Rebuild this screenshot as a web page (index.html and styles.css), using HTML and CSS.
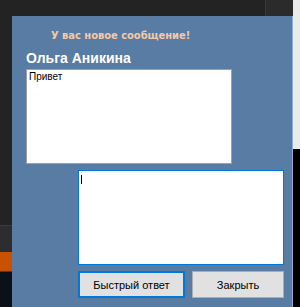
FILE: index.html
```html
<!DOCTYPE html>
<html lang="ru">
<head>
  <meta charset="UTF-8" />
  <title>Новое сообщение</title>
  <link rel="stylesheet" href="styles.css">
</head>
<body>
  <div class="side-left">
    <div class="dark"></div>
    <div class="tab"></div>
    <div class="accent"></div>
    <div class="bottom"></div>
  </div>

  <div class="middle">
    <div class="topbar">
      <div class="topbar-main"></div>
      <div class="topbar-rest"></div>
    </div>

    <div class="dialog">
      <div class="title">У вас новое сообщение!</div>
      <div class="sender">Ольга Аникина</div>
      <div class="box message">Привет</div>
      <div class="box reply"><span class="caret"></span></div>
      <div class="actions">
        <button class="btn btn-default">Быстрый ответ</button>
        <button class="btn btn-close">Закрыть</button>
      </div>
    </div>
  </div>

  <div class="side-right">
    <div class="light"></div>
    <div class="black"></div>
  </div>
</body>
</html>
```

FILE: styles.css
```css
html, body {
  height: 100%;
}
body {
  margin: 0;
  display: flex;
  width: 300px;
  height: 307px;
  overflow: hidden;
  background: #222;
  font-family: "DejaVu Sans", sans-serif;
}

/* background windows around the dialog */
.side-left {
  width: 12px;
  display: flex;
  flex-direction: column;
}
.side-left .dark { height: 225px; background: #232323; border-bottom: 1px solid #3b3b3b; }
.side-left .tab { height: 26px; background: #2d2d30; }
.side-left .accent { height: 19px; background: #ca5100; border-bottom: 1px solid #6a2e08; }
.side-left .bottom { flex: 1; background: #0b1118; }

.side-right {
  width: 7px;
  display: flex;
  flex-direction: column;
}
.side-right .light { height: 149px; background: #ebebeb; }
.side-right .black { flex: 1; background: #000; }

.middle {
  width: 281px;
  display: flex;
  flex-direction: column;
}
.topbar {
  height: 16px;
  display: flex;
}
.topbar-main { width: 253px; background: #232323; border-right: 1px solid #3a3a3a; }
.topbar-rest { flex: 1; background: #2b2b2b; }

/* dialog */
.dialog {
  flex: 1;
  background: #587ca3;
  border-right: 1px solid #8fb0d3;
  padding: 0 0 0 14px;
}
.title {
  padding: 13px 0 0 25px;
  height: 17px;
  color: #f5c9a3;
  font-family: "DejaVu Sans Condensed", "DejaVu Sans", sans-serif;
  font-stretch: condensed;
  font-weight: bold;
  font-size: 11px;
  line-height: 13px;
}
.sender {
  margin-top: 3px;
  height: 20px;
  color: #fff;
  font-family: "Liberation Sans", Arial, sans-serif;
  font-weight: bold;
  font-size: 14px;
  line-height: 18px;
}
.box {
  box-sizing: border-box;
  width: 206px;
  height: 95px;
  background: #fff;
  font-family: "Liberation Sans", Arial, sans-serif;
  font-size: 10px;
  line-height: 11px;
  color: #000;
}
.message {
  border: 1px solid #a0a0a0;
  padding: 1px 0 0 2px;
}
.reply {
  margin: 6px 0 0 52px;
  border: 1px solid #0078d7;
  padding: 4px 2px;
}
.caret {
  display: block;
  width: 1px;
  height: 9px;
  background: #000;
}
.actions {
  margin: 6px 0 0 52px;
  display: flex;
  gap: 7px;
}
.btn {
  box-sizing: border-box;
  height: 27px;
  margin: 0;
  padding: 0;
  background: #e1e1e1;
  color: #000;
  font-family: "Liberation Sans", Arial, sans-serif;
  font-size: 11px;
  border-radius: 0;
}
.btn-default {
  width: 107px;
  border: 2px solid #0078d7;
}
.btn-close {
  width: 92px;
  border: 1px solid #adadad;
}
```
